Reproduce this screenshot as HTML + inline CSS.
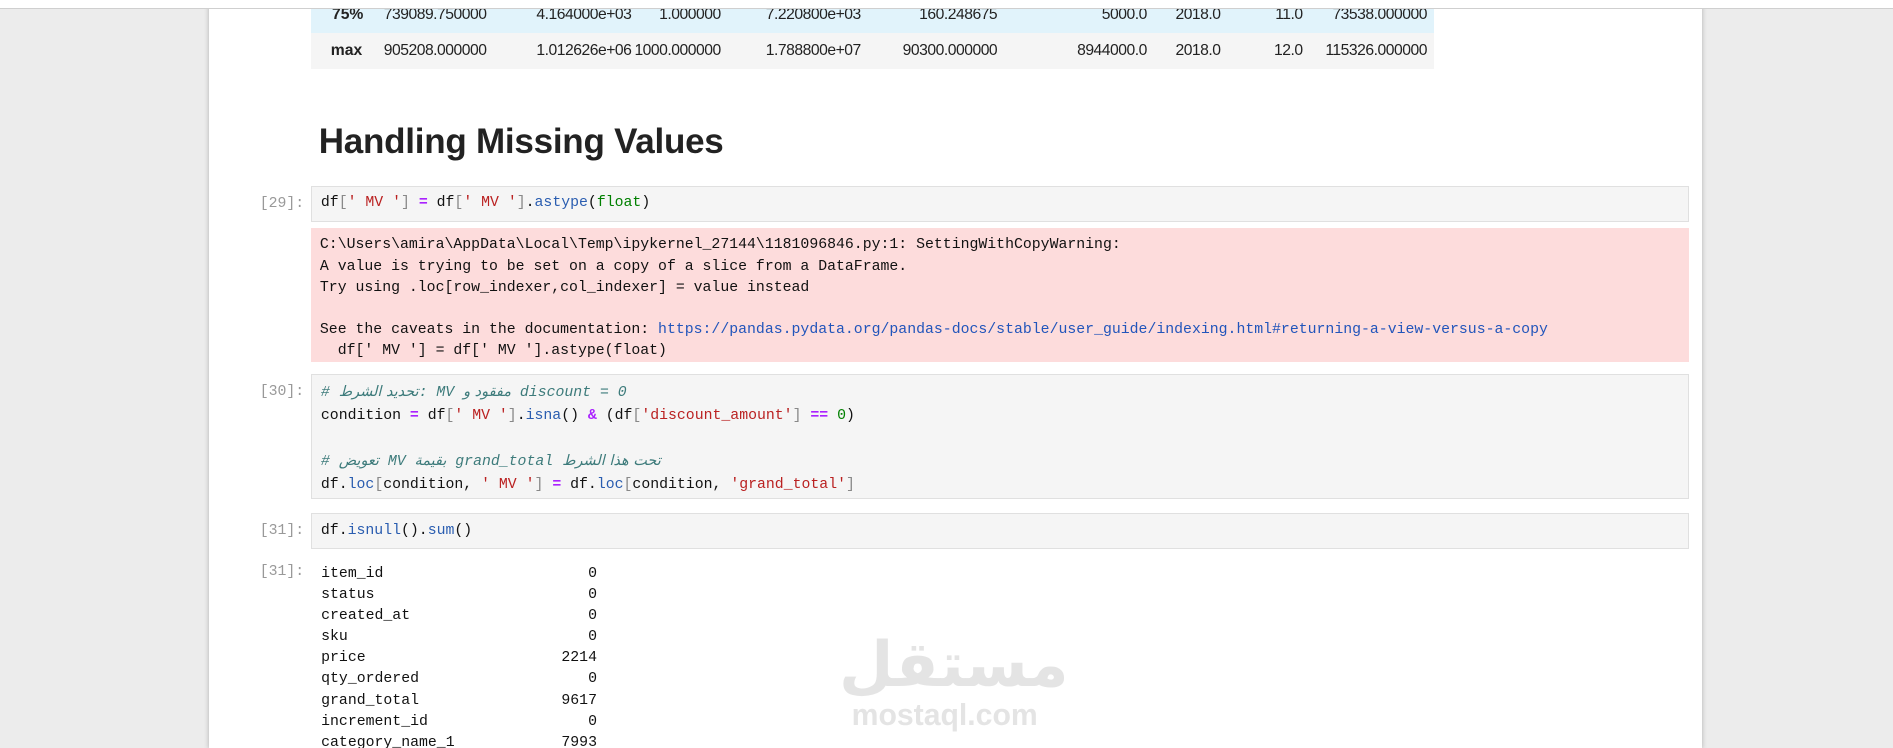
<!DOCTYPE html>
<html><head><meta charset="utf-8">
<style>
html,body{margin:0;padding:0;background:#ececec;overflow:hidden;width:1893px;height:748px}
#w{zoom:1.20727;position:relative;width:1568px;height:620px;background:#ececec;font-family:"Liberation Sans",sans-serif}
.top{position:absolute;left:0;top:0;width:1568px;height:7px;background:#fff;border-bottom:1px solid #cfcfcf;z-index:3}
.page{position:absolute;left:173px;top:0;width:1237px;height:620px;background:#fff;box-shadow:0 0 4px rgba(0,0,0,.25)}
.tbl{position:absolute;left:258px;width:930px;height:29px;font-size:13px;color:#222;letter-spacing:-0.4px}
.tbl span{position:absolute;top:7px;text-align:right}
.r1{top:-2px;background:#e1f3fb}
.r2{top:27px;height:30px;background:#f5f5f5}
h1{position:absolute;left:264px;top:101px;margin:0;font-size:29px;font-weight:bold;color:#222;letter-spacing:-0.2px}
.mono{font-family:"Liberation Mono","DejaVu Sans Mono",monospace;font-size:12.3px;white-space:pre}
.cell{position:absolute;left:258px;width:1139px;background:#f5f5f5;border:1px solid #e0e0e0}
.cell .mono{position:absolute;left:7px;color:#111}
.pr{position:absolute;width:80px;left:172px;text-align:right;color:#999}
.err{position:absolute;left:258px;top:189px;width:1141px;height:111px;background:#fddcdc}
.err .mono{position:absolute;left:7px;top:6px;line-height:17.5px;color:#111}
.o{color:#aa22ff;font-weight:bold}.s{color:#ba2121}.b{color:#888}.g{color:#008000}.m{color:#2a5db0}.c{color:#3d7b7b;font-style:italic}.u{color:#2255bb}
.out{position:absolute;left:266px;top:467px;line-height:17.5px;color:#111}
.wm{position:absolute;left:695px;top:522px;color:#e4e4e4;text-align:center;width:175px}
</style></head><body><div id="w">
<div class="page"></div>
<div class="top"></div>
<div class="tbl r1">
<span style="left:17px;font-weight:bold;letter-spacing:0">75%</span>
<span style="right:785px">739089.750000</span>
<span style="right:665px">4.164000e+03</span>
<span style="right:591px">1.000000</span>
<span style="right:475px">7.220800e+03</span>
<span style="right:362px">160.248675</span>
<span style="right:238px">5000.0</span>
<span style="right:177px">2018.0</span>
<span style="right:109px">11.0</span>
<span style="right:6px">73538.000000</span>
</div>
<div class="tbl r2">
<span style="left:16px;font-weight:bold;top:8px;letter-spacing:0">max</span>
<span style="right:785px;top:8px">905208.000000</span>
<span style="right:665px;top:8px">1.012626e+06</span>
<span style="right:591px;top:8px">1000.000000</span>
<span style="right:475px;top:8px">1.788800e+07</span>
<span style="right:362px;top:8px">90300.000000</span>
<span style="right:238px;top:8px">8944000.0</span>
<span style="right:177px;top:8px">2018.0</span>
<span style="right:109px;top:8px">12.0</span>
<span style="right:6px;top:8px">115326.000000</span>
</div>
<h1>Handling Missing Values</h1>

<div class="mono pr" style="top:162px">[29]:</div>
<div class="cell" style="top:154px;height:28px"><div class="mono" style="top:7px">df<span class="b">[</span><span class="s">' MV '</span><span class="b">]</span> <span class="o">=</span> df<span class="b">[</span><span class="s">' MV '</span><span class="b">]</span>.<span class="m">astype</span>(<span class="g">float</span>)</div></div>
<div class="err"><div class="mono">C:\Users\amira\AppData\Local\Temp\ipykernel_27144\1181096846.py:1: SettingWithCopyWarning:
A value is trying to be set on a copy of a slice from a DataFrame.
Try using .loc[row_indexer,col_indexer] = value instead

See the caveats in the documentation: <span class="u">https://pandas.pydata.org/pandas-docs/stable/user_guide/indexing.html#returning-a-view-versus-a-copy</span>
  df[' MV '] = df[' MV '].astype(float)</div></div>

<div class="mono pr" style="top:318px">[30]:</div>
<div class="cell" style="top:310px;height:102px"><div class="mono" style="top:5px;line-height:18.8px"><span class="c"># <span style="font-family:'DejaVu Sans',sans-serif;font-size:12px">تحديد الشرط</span>: MV <span style="font-family:'DejaVu Sans',sans-serif;font-size:12px">مفقود و</span> discount = 0</span>
condition <span class="o">=</span> df<span class="b">[</span><span class="s">' MV '</span><span class="b">]</span>.<span class="m">isna</span>() <span class="o">&amp;</span> (df<span class="b">[</span><span class="s">'discount_amount'</span><span class="b">]</span> <span class="o">==</span> <span class="g">0</span>)

<span class="c"># <span style="font-family:'DejaVu Sans',sans-serif;font-size:12px">تعويض</span> MV <span style="font-family:'DejaVu Sans',sans-serif;font-size:12px">بقيمة</span> grand_total <span style="font-family:'DejaVu Sans',sans-serif;font-size:12px">تحت هذا الشرط</span></span>
df.<span class="m">loc</span><span class="b">[</span>condition, <span class="s">' MV '</span><span class="b">]</span> <span class="o">=</span> df.<span class="m">loc</span><span class="b">[</span>condition, <span class="s">'grand_total'</span><span class="b">]</span></div></div>

<div class="mono pr" style="top:433px">[31]:</div>
<div class="cell" style="top:425px;height:28px"><div class="mono" style="top:7px">df.<span class="m">isnull</span>().<span class="m">sum</span>()</div></div>

<div class="mono pr" style="top:467px">[31]:</div>
<div class="mono out">item_id                       0
status                        0
created_at                    0
sku                           0
price                      2214
qty_ordered                   0
grand_total                9617
increment_id                  0
category_name_1            7993</div>

<div class="wm"><div style="font-family:'DejaVu Sans',sans-serif;font-size:52px;font-weight:bold;line-height:58px">مستقل</div><div style="font-size:25px;font-weight:bold;line-height:26px">mostaql.com</div></div>
</div></body></html>
